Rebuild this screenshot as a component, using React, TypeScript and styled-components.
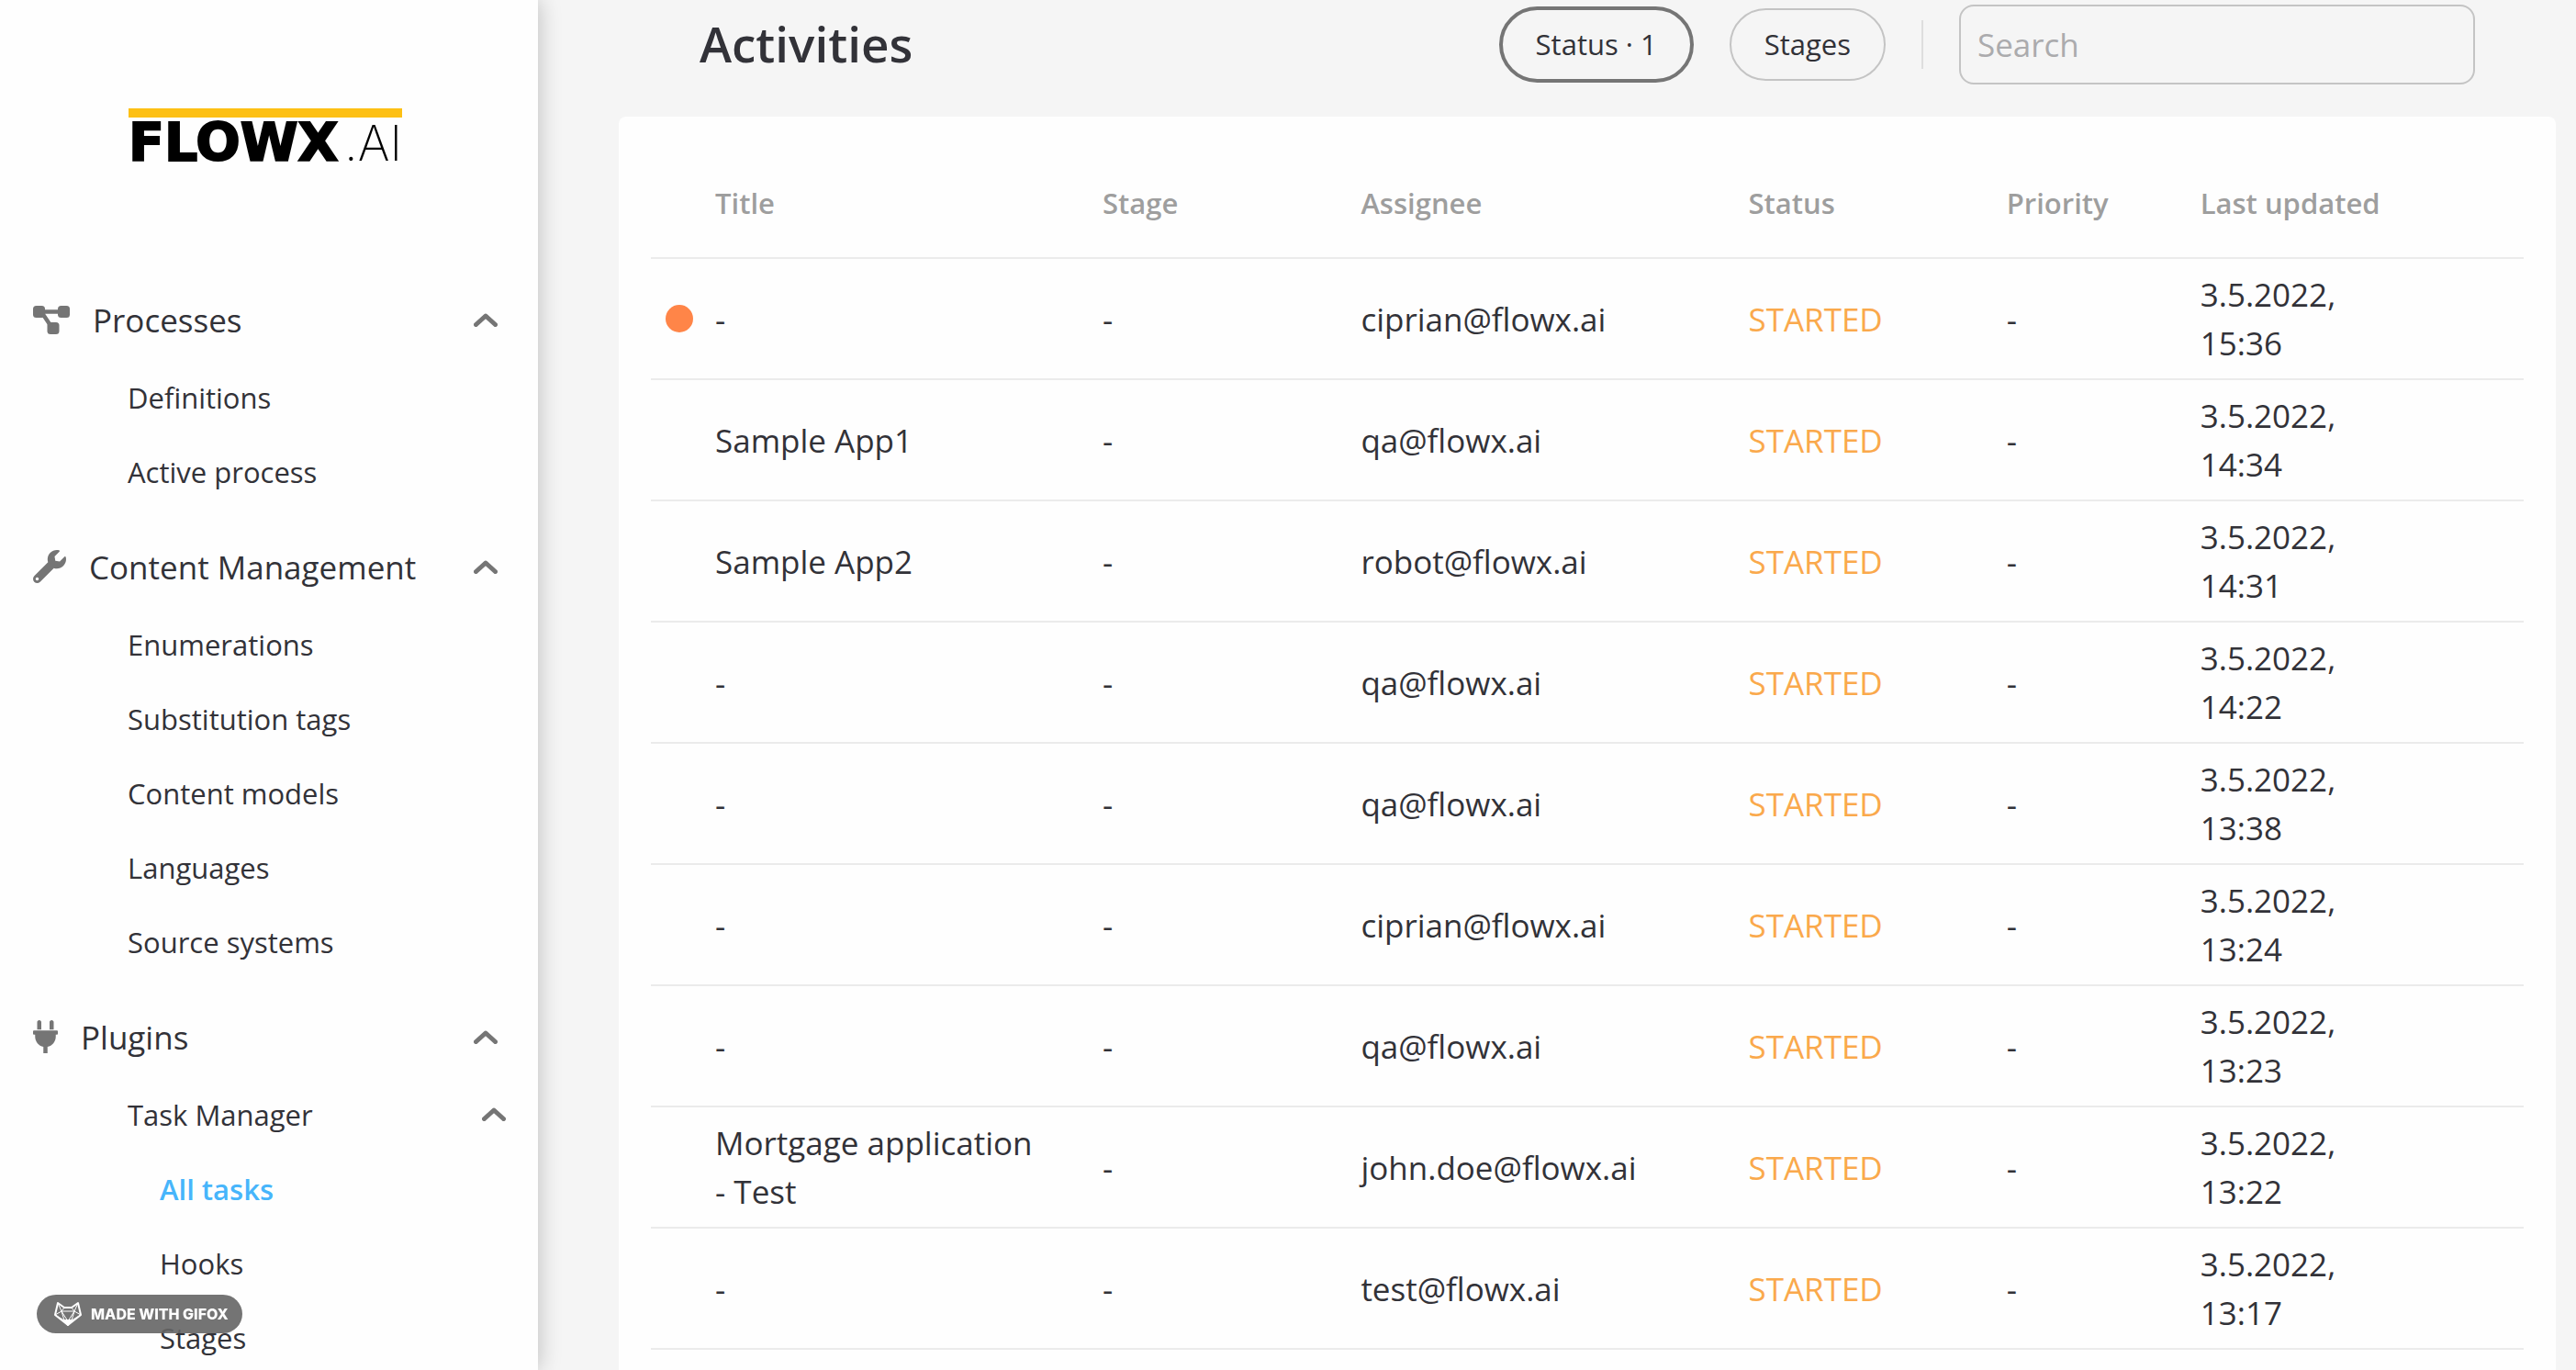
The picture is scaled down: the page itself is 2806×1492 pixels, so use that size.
import React, { useState } from "react";
import styled, { createGlobalStyle } from "styled-components";
import { FaWrench } from "react-icons/fa";

const GlobalStyle = createGlobalStyle`
  * { box-sizing: border-box; }
  body {
    margin: 0;
    background: #f5f5f5;
    color: #323238;
    font-family: "Open Sans", "Noto Sans", sans-serif;
  }
  button, input { font-family: inherit; color: inherit; }
`;

const Page = styled.div`
  display: flex;
  height: 100vh;
  overflow: hidden;
`;

const Sidebar = styled.aside`
  flex: 0 0 586px;
  z-index: 1;
  background: #fefefe;
  box-shadow: 0 0 24px rgba(0, 0, 0, 0.24);
`;

const Logo = styled.a`
  display: block;
  width: 298px;
  margin: 118px 0 128px 140px;
  border-top: 10px solid #fdc014;
  color: #000;
  text-decoration: none;
`;

const LogoWords = styled.span`
  display: flex;
  justify-content: space-between;
  align-items: baseline;
  height: 48px;
  line-height: 54px;
`;

const LogoBold = styled.span`
  font-family: "DejaVu Sans", sans-serif;
  font-size: 57px;
  font-weight: 700;
  -webkit-text-stroke: 2px #000;
`;

const LogoThin = styled.span`
  font-family: Inter, sans-serif;
  font-size: 53px;
  font-weight: 200;
`;

const Section = styled.section`
  margin-bottom: 19px;
`;

const SectionButton = styled.button`
  display: flex;
  align-items: center;
  gap: 25px;
  width: 100%;
  height: 88px;
  padding: 0 44px 0 36px;
  border: 0;
  background: none;
  font-size: 35px;
  text-align: left;
  cursor: pointer;

  > svg:first-child {
    flex: none;
    color: #757575;
  }
`;

const Grow = styled.span`
  flex: 1;
`;

const NavList = styled.ul`
  margin: 0;
  padding: 0;
  list-style: none;
`;

const NavLink = styled.a<{ $level: number; $active?: boolean }>`
  display: flex;
  align-items: center;
  height: 81px;
  padding-left: ${(p) => (p.$level === 2 ? 174 : 139)}px;
  font-size: 31px;
  font-weight: ${(p) => (p.$active ? 600 : 400)};
  color: ${(p) => (p.$active ? "#47b5fb" : "inherit")};
  text-decoration: none;
`;

const SubButton = styled.button`
  display: flex;
  align-items: center;
  width: 100%;
  height: 81px;
  padding: 0 35px 0 139px;
  border: 0;
  background: none;
  font-size: 31px;
  text-align: left;
  cursor: pointer;
`;

const Main = styled.main`
  flex: 1;
  display: flex;
  flex-direction: column;
  min-width: 0;
  padding: 5px 22px 0 88px;
`;

const Toolbar = styled.header`
  display: flex;
  align-items: center;
  gap: 39px;
  height: 87px;
  margin-bottom: 35px;
  padding: 0 88px;
`;

const Heading = styled.h1`
  flex: 1;
  margin: 0;
  padding-bottom: 2px;
  font-size: 53px;
  font-weight: 600;
`;

const FilterButton = styled.button<{ $selected?: boolean }>`
  height: ${(p) => (p.$selected ? 83 : 79)}px;
  padding: 0 36px 2px;
  border: ${(p) => (p.$selected ? "4px solid #757575" : "2px solid #c4c4c4")};
  border-radius: 42px;
  background: none;
  font-size: 31px;
  cursor: pointer;
`;

const Divider = styled.div`
  width: 2px;
  height: 53px;
  background: #dedede;
`;

const Search = styled.input`
  width: 562px;
  height: 87px;
  padding: 0 18px;
  border: 2px solid #c4c4c4;
  border-radius: 16px;
  background: none;
  font-size: 35px;

  &::placeholder {
    color: #ababad;
    opacity: 1;
  }
`;

const Card = styled.div`
  flex: 1;
  padding: 26px 35px 0;
  border-radius: 8px 8px 0 0;
  background: #fefefe;
`;

const Table = styled.table`
  width: 100%;
  table-layout: fixed;
  border-collapse: separate;
  border-spacing: 0;
  font-size: 35px;
  line-height: 53px;
`;

const MarkerCol = styled.col`
  width: 70px;
`;

const Col = styled.col<{ $share: number }>`
  width: ${(p) => p.$share}%;
`;

const HeadCell = styled.th`
  height: 129px;
  padding: 10px 0 0;
  border-bottom: 2px solid #ebebeb;
  color: #9e9e9e;
  font-size: 31px;
  font-weight: 600;
  text-align: left;
`;

const Cell = styled.td<{ $status?: boolean }>`
  height: 132px;
  padding: 12px 0;
  border-bottom: 2px solid #ebebeb;
  color: ${(p) => (p.$status ? "#faa94c" : "inherit")};
  vertical-align: middle;
`;

const TitleCell = styled(Cell)`
  padding-right: 64px;
`;

const Marker = styled.span`
  display: block;
  width: 30px;
  height: 30px;
  margin-left: 16px;
  border-radius: 50%;
  background: #ff8548;
`;

const Badge = styled.div`
  position: fixed;
  left: 40px;
  bottom: 40px;
  z-index: 2;
  display: flex;
  align-items: center;
  gap: 9px;
  width: 224px;
  height: 42px;
  padding-left: 18px;
  border-radius: 21px;
  background: rgba(101, 101, 101, 0.9);
  color: #fff;
  font-family: Inter, sans-serif;
  font-size: 16px;
  font-weight: 800;
  white-space: nowrap;
`;

const Chevron = () => (
  <svg
    width="26"
    height="15"
    viewBox="0 0 26 15"
    fill="none"
    stroke="#757575"
    strokeWidth="5"
    strokeLinecap="round"
    strokeLinejoin="round"
    aria-hidden="true"
  >
    <path d="M2.5 12.5 13 3 23.5 12.5" />
  </svg>
);

const DiagramIcon = () => (
  <svg width="40" height="31" viewBox="0 0 40 31" fill="currentColor" aria-hidden="true">
    <rect x="0" y="0" width="13" height="13" rx="3.5" />
    <rect x="27" y="0" width="13" height="13" rx="3.5" />
    <rect x="15.5" y="18" width="13" height="13" rx="3.5" />
    <path d="M10 6.5H30M10 8 20 23" fill="none" stroke="currentColor" strokeWidth="4.4" />
  </svg>
);

const PlugIcon = () => (
  <svg width="27" height="36" viewBox="0 0 384 512" fill="currentColor" aria-hidden="true">
    <path d="M256 144V32c0-17.673 14.327-32 32-32s32 14.327 32 32v112h-64zm112 16H16c-8.837 0-16 7.163-16 16v32c0 8.837 7.163 16 16 16h16v32c0 77.406 54.969 141.971 128 156.796V512h64v-99.204c73.031-14.825 128-79.39 128-156.796v-32h16c8.837 0 16-7.163 16-16v-32c0-8.837-7.163-16-16-16zm-240-16V32c0-17.673-14.327-32-32-32S64 14.327 64 32v112h64z" />
  </svg>
);

const Fox = () => (
  <svg
    width="32"
    height="28"
    viewBox="0 0 32 28"
    fill="none"
    stroke="#fff"
    strokeWidth="2"
    strokeLinejoin="round"
    aria-hidden="true"
  >
    <path d="M5 2 12 7H20L27 2 30 15 16 26 2 15Z" />
    <path
      strokeWidth="1"
      d="M5 2 9 11 2 15 12 21 9 11 23 11 27 2M23 11 30 15 20 21 23 11M12 7 9 11M20 7 23 11M9 11 16 22 23 11"
    />
    <path fill="#fff" d="M12 21H20L16 26Z" />
  </svg>
);

const sections = [
  {
    title: "Processes",
    icon: <DiagramIcon />,
    items: ["Definitions", "Active process"],
  },
  {
    title: "Content Management",
    icon: <FaWrench size={36} />,
    items: ["Enumerations", "Substitution tags", "Content models", "Languages", "Source systems"],
  },
];

const tasks = ["All tasks", "Hooks", "Stages"];

const columns = [
  { label: "Title", share: 20.69 },
  { label: "Stage", share: 13.79 },
  { label: "Assignee", share: 20.69 },
  { label: "Status", share: 13.79 },
  { label: "Priority", share: 10.34 },
  { label: "Last updated", share: 10.34 },
];

const rows = [
  { title: "-", assignee: "ciprian@flowx.ai", updated: "3.5.2022, 15:36", marked: true },
  { title: "Sample App1", assignee: "qa@flowx.ai", updated: "3.5.2022, 14:34" },
  { title: "Sample App2", assignee: "robot@flowx.ai", updated: "3.5.2022, 14:31" },
  { title: "-", assignee: "qa@flowx.ai", updated: "3.5.2022, 14:22" },
  { title: "-", assignee: "qa@flowx.ai", updated: "3.5.2022, 13:38" },
  { title: "-", assignee: "ciprian@flowx.ai", updated: "3.5.2022, 13:24" },
  { title: "-", assignee: "qa@flowx.ai", updated: "3.5.2022, 13:23" },
  { title: "Mortgage application - Test", assignee: "john.doe@flowx.ai", updated: "3.5.2022, 13:22" },
  { title: "-", assignee: "test@flowx.ai", updated: "3.5.2022, 13:17" },
];

export default function App() {
  const [query, setQuery] = useState("");

  return (
    <Page>
      <GlobalStyle />
      <Sidebar>
        <Logo href="#">
          <LogoWords>
            <LogoBold>FLOWX</LogoBold>
            <LogoThin>.AI</LogoThin>
          </LogoWords>
        </Logo>
        <nav>
          {sections.map((section) => (
            <Section key={section.title}>
              <SectionButton>
                {section.icon}
                <Grow>{section.title}</Grow>
                <Chevron />
              </SectionButton>
              <NavList>
                {section.items.map((item) => (
                  <li key={item}>
                    <NavLink href="#" $level={1}>{item}</NavLink>
                  </li>
                ))}
              </NavList>
            </Section>
          ))}
          <Section>
            <SectionButton>
              <PlugIcon />
              <Grow>Plugins</Grow>
              <Chevron />
            </SectionButton>
            <SubButton>
              <Grow>Task Manager</Grow>
              <Chevron />
            </SubButton>
            <NavList>
              {tasks.map((task) => (
                <li key={task}>
                  <NavLink href="#" $level={2} $active={task === "All tasks"}>{task}</NavLink>
                </li>
              ))}
            </NavList>
          </Section>
        </nav>
      </Sidebar>

      <Main>
        <Toolbar>
          <Heading>Activities</Heading>
          <FilterButton $selected>Status · 1</FilterButton>
          <FilterButton>Stages</FilterButton>
          <Divider />
          <Search
            aria-label="Search"
            placeholder="Search"
            value={query}
            onChange={(e) => setQuery(e.target.value)}
          />
        </Toolbar>
        <Card>
          <Table>
            <colgroup>
              <MarkerCol />
              {columns.map((c) => (
                <Col key={c.label} $share={c.share} />
              ))}
              <col />
            </colgroup>
            <thead>
              <tr>
                <HeadCell />
                {columns.map((c) => (
                  <HeadCell key={c.label} scope="col">{c.label}</HeadCell>
                ))}
                <HeadCell />
              </tr>
            </thead>
            <tbody>
              {rows.map((row) => (
                <tr key={row.updated}>
                  <Cell>{row.marked && <Marker />}</Cell>
                  <TitleCell>{row.title}</TitleCell>
                  <Cell>-</Cell>
                  <Cell>{row.assignee}</Cell>
                  <Cell $status>STARTED</Cell>
                  <Cell>-</Cell>
                  <Cell>{row.updated}</Cell>
                  <Cell />
                </tr>
              ))}
            </tbody>
          </Table>
        </Card>
      </Main>
      <Badge>
        <Fox />
        MADE WITH GIFOX
      </Badge>
    </Page>
  );
}
